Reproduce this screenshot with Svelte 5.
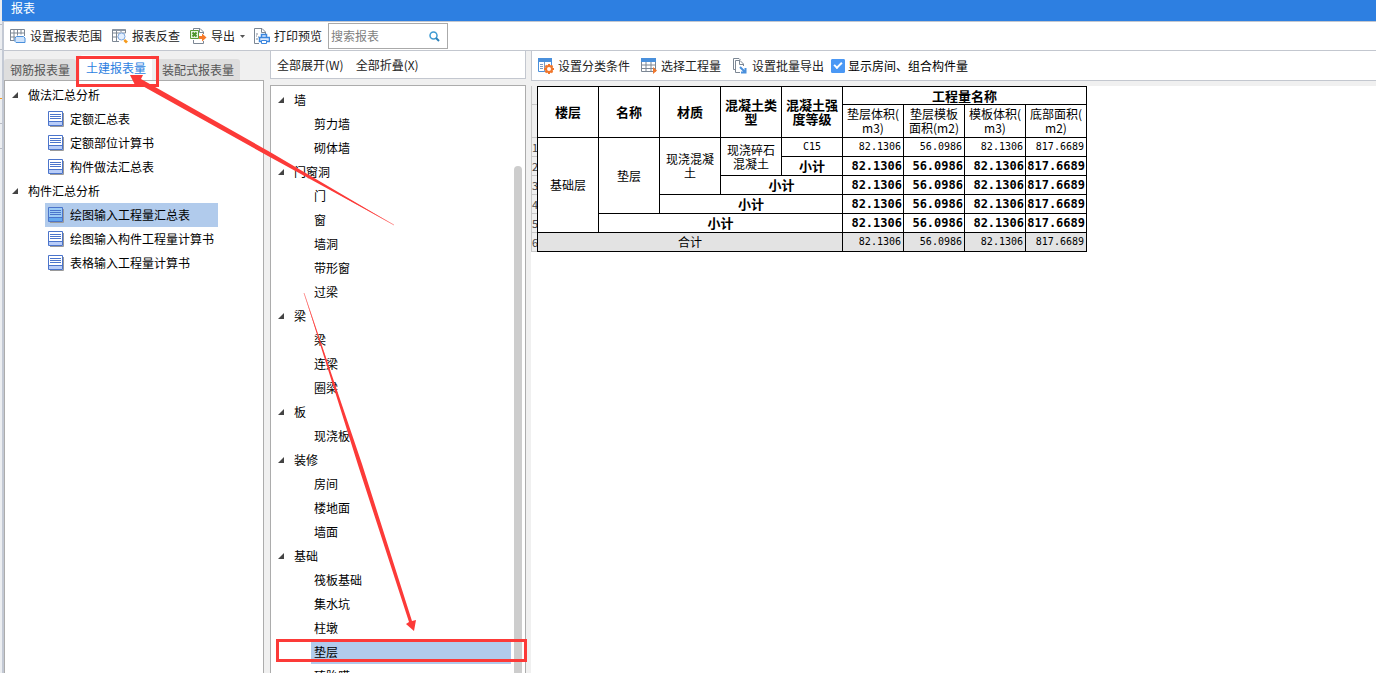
<script>
  const reportGroups = [
    { name: "做法汇总分析", items: ["定额汇总表", "定额部位计算书", "构件做法汇总表"] },
    {
      name: "构件汇总分析",
      items: ["绘图输入工程量汇总表", "绘图输入构件工程量计算书", "表格输入工程量计算书"],
    },
  ];

  const componentGroups = [
    { name: "墙", items: ["剪力墙", "砌体墙"] },
    { name: "门窗洞", items: ["门", "窗", "墙洞", "带形窗", "过梁"] },
    { name: "梁", items: ["梁", "连梁", "圈梁"] },
    { name: "板", items: ["现浇板"] },
    { name: "装修", items: ["房间", "楼地面", "墙面"] },
    { name: "基础", items: ["筏板基础", "集水坑", "柱墩", "垫层", "砖胎膜"] },
  ];

  const tabs = ["钢筋报表量", "土建报表量", "装配式报表量"];
  const values = ["82.1306", "56.0986", "82.1306", "817.6689"];

  let activeTab = $state("土建报表量");
  let activeReport = $state("绘图输入工程量汇总表");
  let activeComponent = $state("垫层");
  let search = $state("");
  let showRooms = $state(true);
</script>

{#snippet amounts()}
  {#each values as value}
    <td class="num">{value}</td>
  {/each}
{/snippet}

<div class="screen">
  <div class="behind" aria-hidden="true">
    <i></i><i></i><i class="orange"></i><i></i><i></i>
  </div>

  <div class="window">
    <header class="title">报表</header>

    <div class="toolbar">
      <button class="tool">
        <svg width="16" height="16" viewBox="0 0 16 16" fill="none">
          <path d="M.5 13V1.500h14V8M.5 5h14M.5 9h5M.5 12.500h4M4 1.500v11M7.500 1.500v6M11 1.500v5" stroke="#7c8794" />
          <path d="M6.500 8.500h7l1.500 1.500v4.500H6l-1-1V10z" fill="#cfe3fb" stroke="#4a90dc" />
        </svg>
        设置报表范围
      </button>
      <button class="tool">
        <svg width="16" height="16" viewBox="0 0 16 16" fill="none">
          <path d="M13.500 5V1.500H.5v12H7M.5 5h13M.5 9h5M4.500 1v12M9 1v3" stroke="#7c8794" />
          <path d="M1 1h12v2H1z" fill="#8b96a3" />
          <circle cx="9.500" cy="8.500" r="3.500" fill="#e4f0ff" stroke="#7fa9df" />
          <path d="M13 11l3 2.500-2 2-2.500-2.500z" fill="#f59a1c" />
        </svg>
        报表反查
      </button>
      <button class="tool export">
        <svg width="17" height="16" viewBox="0 0 17 16" fill="none">
          <path d="M3.500 2V.5H10L13.500 4v2M3.500 12v3.500h10V13M9.500.5v4h4" stroke="#7c8794" />
          <path d="M.5 2.500h8v8h-8z" fill="#eaf5e2" stroke="#5c9e35" />
          <path d="M2.500 4.500l4 4M6.500 4.500l-4 4" stroke="#4d942a" stroke-width="2" />
          <path d="M9 8h3V5.500L16.500 9.500 12 13.500V11H9z" fill="#f5792a" />
        </svg>
        导出
        <svg class="drop" width="5" height="3" viewBox="0 0 5 3"><path d="M0 0h5L2.500 3z" fill="#555" /></svg>
      </button>
      <button class="tool">
        <svg width="16" height="16" viewBox="0 0 16 16" fill="none">
          <path d="M5 15.500H.5V.5H8L11.500 4v2M7.500.5v4h4" stroke="#7c8794" />
          <path d="M2 6h2M2 8h1M4 9h1M2 11h2" stroke="#7c8794" />
          <path d="M7.500 9.500v-3h5v3M5.500 9.500h10v4h-10z" fill="#dceaff" stroke="#3b86de" stroke-width="1.500" />
          <path d="M7.500 12.500h5v3h-5z" fill="#fff" stroke="#3b86de" />
        </svg>
        打印预览
      </button>
      <label class="search">
        <input type="text" placeholder="搜索报表" aria-label="搜索报表" bind:value={search} />
        <svg width="11" height="11" viewBox="0 0 11 11" fill="none">
          <circle cx="4.500" cy="4.500" r="3.500" stroke="#3e9bd3" stroke-width="1.500" />
          <path d="M7 7l3 3" stroke="#2c80b8" stroke-width="2" />
        </svg>
      </label>
    </div>

    <main>
      <section class="reports">
        <nav class="tabs">
          {#each tabs as tab}
            <button class:active={tab === activeTab} onclick={() => (activeTab = tab)}>{tab}</button>
          {/each}
        </nav>
        <div class="panel">
          {#each reportGroups as group}
            <div class="group"><span class="caret"></span>{group.name}</div>
            {#each group.items as item}
              <button class="report" class:selected={item === activeReport} onclick={() => (activeReport = item)}>
                <svg width="16" height="16" viewBox="0 0 16 16">
                  <path d="M2 15.500h13.500V2" fill="none" stroke="#9a9a9a" />
                  <path class="page" d="M.5.5h14v14H.5z" />
                  <path class="foot" d="M1 10.500h13V14H1z" />
                  <path d="M2 3.500h11M2 5.500h11M2 7.500h11M1 10.500h13" stroke="#4b74cb" />
                </svg>
                <span>{item}</span>
              </button>
            {/each}
          {/each}
        </div>
      </section>

      <section class="components">
        <div class="bar">
          <button class="tool">全部展开(W)</button>
          <button class="tool">全部折叠(X)</button>
        </div>
        <div class="panel">
          <div class="list">
            {#each componentGroups as group}
              <div class="group"><span class="caret"></span>{group.name}</div>
              {#each group.items as item}
                <button class="component" class:selected={item === activeComponent} onclick={() => (activeComponent = item)}>
                  {item}
                </button>
              {/each}
            {/each}
          </div>
          <div class="scroll"></div>
        </div>
      </section>

      <section class="detail">
        <div class="bar">
          <button class="tool">
            <svg width="16" height="16" viewBox="0 0 16 16" fill="none">
              <path d="M.5.5h13v13H.5z" fill="#fff" stroke="#4a90dc" />
              <path d="M0 0h14v4H0z" fill="#4a90dc" />
              <path d="M2 6.500h3M2 8.500h3M2 10.500h3M6.500 4v10" stroke="#7c9cc4" />
              <circle cx="11" cy="11" r="3" fill="#fff" stroke="#f0762b" stroke-width="2" />
              <path d="M11 6v2M11 14v2M6 11h2M14 11h2M7.500 7.500l1.500 1.500M13 13l1.500 1.500M14.500 7.500L13 9M9 13l-1.500 1.500" stroke="#f0762b" stroke-width="2" />
            </svg>
            设置分类条件
          </button>
          <button class="tool">
            <svg width="16" height="16" viewBox="0 0 16 16" fill="none">
              <path d="M.5 3v10.500h14V3M.5 7h14M.5 10.500h14M5 3v11M10 3v11" stroke="#7c8794" />
              <path d="M0 0h15v4H0z" fill="#4a90dc" />
              <path d="M12 9l4 3.500-4 3.500z" fill="#f0762b" />
            </svg>
            选择工程量
          </button>
          <button class="tool">
            <svg width="16" height="16" viewBox="0 0 16 16" fill="none">
              <path d="M3 11.500H1.500V.5H7L8.500 2" stroke="#7c8794" />
              <path d="M8 14.500H3.500v-12H8L11.500 6v2M7.500 2.500v4h4" fill="#fff" stroke="#7c8794" />
              <path d="M8 9l5 5M13.500 10v4.500H9" stroke="#4a90dc" stroke-width="2" />
            </svg>
            设置批量导出
          </button>
          <label class="check">
            <input type="checkbox" bind:checked={showRooms} />
            显示房间、组合构件量
          </label>
        </div>

        <div class="sheet">
          <div class="rows">
            <span class="h1"></span>
            <span class="h2"></span>
            {#each [1, 2, 3, 4, 5, 6] as n}
              <span>{n}</span>
            {/each}
          </div>
          <table>
            <thead>
              <tr class="top">
                <th rowspan="2">楼层</th>
                <th rowspan="2">名称</th>
                <th rowspan="2">材质</th>
                <th rowspan="2">混凝土类型</th>
                <th rowspan="2">混凝土强度等级</th>
                <th colspan="4">工程量名称</th>
              </tr>
              <tr class="units">
                <td>垫层体积(<br />m3)</td>
                <td>垫层模板<br />面积(m2)</td>
                <td>模板体积(<br />m3)</td>
                <td>底部面积(<br />m2)</td>
              </tr>
            </thead>
            <tbody>
              <tr>
                <td rowspan="5">基础层</td>
                <td rowspan="4">垫层</td>
                <td rowspan="3">现浇混凝<br />土</td>
                <td rowspan="2">现浇碎石<br />混凝土</td>
                <td class="code">C15</td>
                {@render amounts()}
              </tr>
              {#each [1, 2, 3, 4] as span}
                <tr class="subtotal">
                  <td colspan={span}>小计</td>
                  {@render amounts()}
                </tr>
              {/each}
              <tr class="total">
                <td colspan="5">合计</td>
                {@render amounts()}
              </tr>
            </tbody>
          </table>
        </div>
      </section>
    </main>
  </div>

  <svg class="marks" width="540" height="673" viewBox="0 0 540 673" aria-hidden="true">
    <g fill="none" stroke="#fc3a38" stroke-width="3">
      <path d="M77.500 57.500h80v28h-80z" />
      <path d="M277.500 640.500h248v20h-248z" />
    </g>
    <g fill="#fc3a38">
      <path d="M130 75l13 0-2 4L270 152 394 225 268 156 139 84l-3 3z" />
      <path d="M304 293L362 464 412 621l4-1-2 11-8-7 3-2L358 465z" />
    </g>
    <path d="M304 293L330 371M394 225L330 189" stroke="#fc3a38" stroke-opacity=".5" />
  </svg>
</div>

<style>
  :global(body) {
    margin: 0;
  }

  .screen {
    position: relative;
    display: flex;
    height: 100vh;
    overflow: hidden;
    background: #f0f0f0;
    color: #000;
    font: 12px/24px "Noto Sans CJK SC", "Noto Sans", sans-serif;
  }

  button,
  input {
    margin: 0;
    padding: 0;
    border: 0;
    background: none;
    color: inherit;
    font: inherit;
  }

  svg {
    flex: none;
  }

  .behind {
    display: flex;
    flex-direction: column;
    width: 2px;
    background: #eceef1;
  }

  .behind i {
    height: 24px;
    border-bottom: 1px solid #b9bcc4;
  }

  .behind .orange {
    height: 48px;
    border-bottom-color: #f59a1c;
  }

  .window {
    display: flex;
    flex: 1;
    flex-direction: column;
    min-width: 0;
    border-left: 2px solid #c3c9d4;
  }

  .title {
    height: 21px;
    margin-left: -2px;
    padding-left: 9px;
    background: #2d7fe1;
    color: #fff;
    line-height: 16px;
  }

  .toolbar {
    display: flex;
    align-items: center;
    gap: 1px;
    height: 28px;
    padding-left: 2px;
    border-top: 1px solid #c3c7cf;
    border-bottom: 1px solid #c3c7cf;
    background: #fff;
  }

  .tool {
    display: flex;
    align-items: center;
    gap: 4px;
    padding: 0 4px;
    color: #222;
    white-space: nowrap;
  }

  .toolbar .tool {
    padding: 0 5px 0 4px;
  }

  .toolbar .export {
    padding-right: 4px;
  }

  .drop {
    margin-left: 1px;
  }

  .search {
    display: flex;
    align-items: center;
    box-sizing: border-box;
    width: 120px;
    height: 26px;
    padding: 0 7px 0 2px;
    border: 1px solid #aaa;
  }

  .search input {
    flex: 1;
    min-width: 0;
    outline: 0;
  }

  .search input::placeholder {
    color: #7f7f7f;
    opacity: 1;
  }

  main {
    display: flex;
    flex: 1;
    min-height: 0;
  }

  section {
    display: flex;
    flex-direction: column;
    min-height: 0;
  }

  .reports {
    width: 260px;
    margin-right: 6px;
  }

  .tabs {
    display: flex;
    align-items: flex-end;
    gap: 4px;
    height: 29px;
  }

  .tabs button {
    height: 21px;
    padding: 0 6px;
    border-radius: 3px 3px 0 0;
    background: #dedede;
    color: #555;
    line-height: 20px;
  }

  .tabs .active {
    height: 25px;
    background: #fff;
    color: #2d7fe1;
  }

  .panel {
    flex: 1;
    min-height: 0;
    overflow: hidden;
    border: 1px solid #acacac;
    border-bottom: 0;
    background: #fff;
  }

  .reports .panel {
    padding-top: 2px;
  }

  .group {
    display: flex;
    align-items: center;
    height: 24px;
    padding-left: 7px;
  }

  .caret {
    width: 6px;
    height: 6px;
    margin-right: 10px;
    background: #444;
    clip-path: polygon(100% 0, 100% 100%, 0 100%);
  }

  .report {
    display: flex;
    align-items: center;
    gap: 6px;
    height: 24px;
    margin-left: 40px;
    padding: 0 4px 0 3px;
  }

  .report.selected {
    width: 173px;
  }

  .selected {
    background: #b1cbec;
  }

  .page {
    fill: #fff;
    stroke: #4b74cb;
  }

  .foot {
    fill: #b9cdf8;
  }

  .selected .page {
    fill: #9ccbf5;
  }

  .selected .foot {
    fill: #64a8ee;
  }

  .components {
    width: 256px;
    margin-right: 5px;
  }

  .bar {
    display: flex;
    align-items: center;
    height: 27px;
    border: 1px solid #c3c7cf;
    border-top: 0;
    background: #fff;
  }

  .components .bar {
    gap: 4px;
    padding-left: 2px;
    margin-bottom: 6px;
  }

  .components .panel {
    display: flex;
  }

  .list {
    flex: 1;
    padding-top: 2px;
  }

  .component {
    display: block;
    width: 200px;
    height: 24px;
    margin-left: 40px;
    padding-left: 3px;
    text-align: left;
  }

  .scroll {
    width: 8px;
    margin: 80px 3px 0 0;
    border-radius: 4px 4px 0 0;
    background: #cdcdcd;
  }

  .detail {
    flex: 1;
    min-width: 0;
  }

  .detail .bar {
    gap: 3px;
    height: 29px;
    padding-left: 2px;
    margin-bottom: 5px;
    border-right: 0;
  }

  .check {
    display: flex;
    align-items: center;
    gap: 3px;
    white-space: nowrap;
  }

  .check input {
    display: grid;
    place-items: center;
    box-sizing: border-box;
    width: 14px;
    height: 14px;
    border: 1px solid #4a98f5;
    border-radius: 1px;
    appearance: none;
    background: #fff;
  }

  .check input:checked {
    background: #4a98f5;
  }

  .check input:checked::before {
    content: "";
    width: 8px;
    height: 5px;
    margin-top: -3px;
    border: solid #fff;
    border-width: 0 0 2px 2px;
    box-sizing: border-box;
    transform: rotate(-45deg);
  }

  .sheet {
    display: flex;
    flex: 1;
    align-items: flex-start;
    background: #fff;
  }

  .rows {
    display: flex;
    flex-direction: column;
    width: 5px;
    border-left: 1px solid #c8c8c8;
    background: #f0f0f0;
  }

  .rows span {
    box-sizing: border-box;
    height: 19px;
    border-bottom: 1px solid #c8c8c8;
    color: #444;
    font-size: 11px;
    line-height: 18px;
  }

  .rows .h2 {
    height: 33px;
  }

  table {
    width: 550px;
    border-collapse: collapse;
    table-layout: fixed;
    line-height: 14px;
  }

  th,
  td {
    box-sizing: border-box;
    height: 19px;
    padding: 0;
    border: 1px solid #000;
    text-align: center;
  }

  th,
  .subtotal td {
    font-size: 13px;
    font-weight: bold;
  }

  .top,
  .top th {
    height: 18px;
  }

  .units td {
    height: 33px;
  }

  .code,
  .num,
  .total .num {
    font-family: "DejaVu Sans Mono", monospace;
    font-size: 10px;
  }

  .num {
    padding-right: 2px;
    text-align: right;
  }

  .subtotal .num {
    padding-right: 1px;
    font-family: "DejaVu Sans Mono", monospace;
    font-size: 12px;
  }

  .total {
    background: #e3e3e3;
  }

  .marks {
    position: absolute;
    top: 0;
    left: 0;
    pointer-events: none;
  }
</style>
